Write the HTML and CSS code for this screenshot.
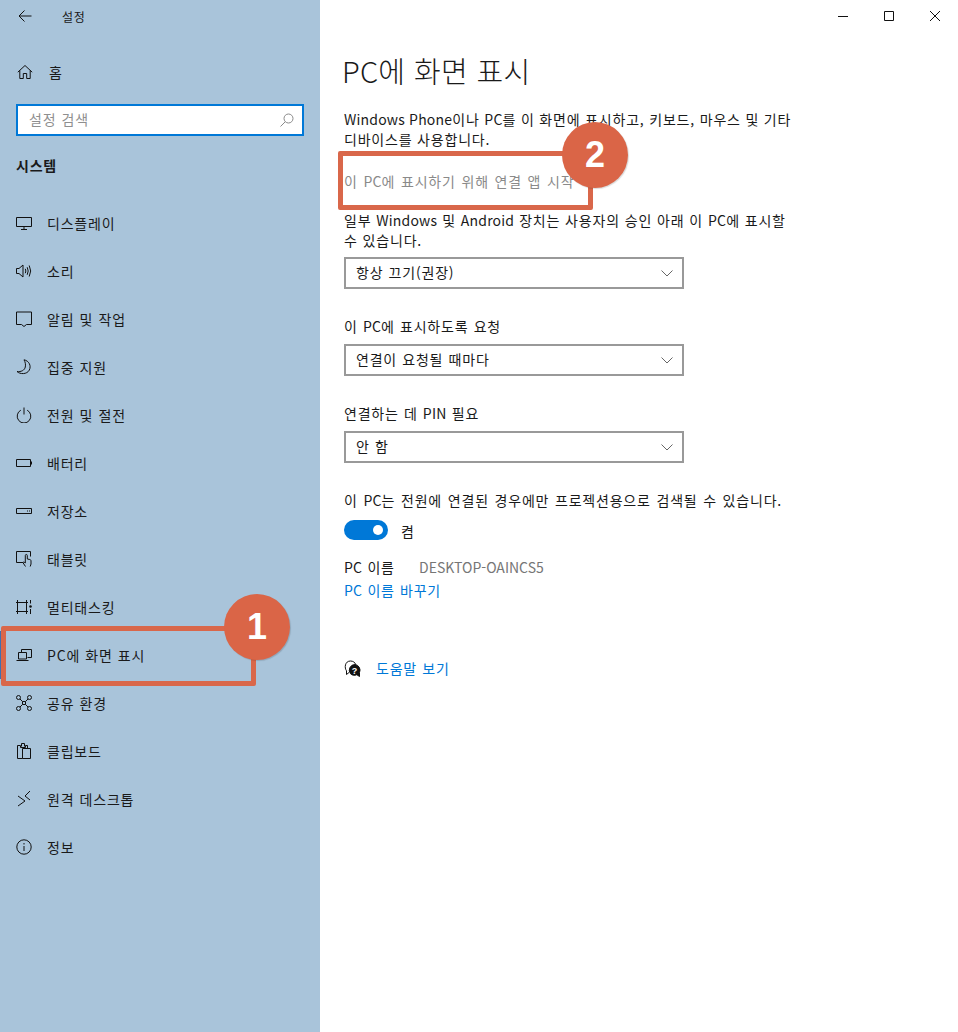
FILE: index.html
```html
<!DOCTYPE html>
<html lang="ko">
  <head>
    <meta charset="utf-8">
    <title>설정</title>
    <link rel="stylesheet" href="styles.css">
  </head>
  <body>
    <div class="app">

      <!-- left menu -->
      <aside class="sidebar">
        <div class="topbar">
          <svg class="backIcon" width="16" height="16" viewBox="0 0 16 16"><path d="M14.500 8H2M7.500 2.500L2 8l5.500 5.500" /></svg>
          <span class="appName">설정</span>
        </div>
        <div class="homeRow">
          <svg class="icon" width="16" height="16" viewBox="0 0 16 16"><path d="M.8 8.200L8 1.500l7.200 6.700M2.800 6.500v8h3.500V9.500h3.400v5h3.500v-8" /></svg>
          <span class="homeText">홈</span>
        </div>
        <div class="searchBox">
          <span class="searchText">설정 검색</span>
          <svg class="searchIcon" width="14" height="14" viewBox="0 0 14 14"><circle cx="8.500" cy="5.500" r="4.500" /><path d="M5.200 8.800L.5 13.500" /></svg>
        </div>
        <h2 class="groupTitle">시스템</h2>
        <nav class="menu">
          <a class="menuItem">
            <svg class="icon" width="16" height="16" viewBox="0 0 16 16"><path d="M.5 2.500h15v9H.5zM8 11.500v2.500M5 14.500h6" /></svg>
            <span>디스플레이</span>
          </a>
          <a class="menuItem">
            <svg class="icon" width="16" height="16" viewBox="0 0 16 16"><path d="M.5 5.500h2.500L7 2v12l-4-3.500H.5zM9.300 5.800q1.100 2.200 0 4.400M11.200 4.200q2 3.800 0 7.600M13.200 2.500q3 5.500 0 11" /></svg>
            <span>소리</span>
          </a>
          <a class="menuItem">
            <svg class="icon" width="16" height="16" viewBox="0 0 16 16"><path d="M.5 1h15v12.500h-5l-2.500 2-2.500-2H.5z" /></svg>
            <span>알림 및 작업</span>
          </a>
          <a class="menuItem">
            <svg class="icon" width="16" height="16" viewBox="0 0 16 16"><path d="M8 .8c5 1 7.500 6 5.300 10.300C11 15.500 4 15.500 1 12.500c4 .5 7.500-1 8.300-4.500C9.800 5.500 9.300 3 8 .8z" /></svg>
            <span>집중 지원</span>
          </a>
          <a class="menuItem">
            <svg class="icon" width="16" height="16" viewBox="0 0 16 16"><path d="M8 .5v7M4.800 3.200a6.800 6.800 0 1 0 6.400 0" /></svg>
            <span>전원 및 절전</span>
          </a>
          <a class="menuItem">
            <svg class="icon" width="16" height="16" viewBox="0 0 16 16"><path d="M.5 4.500h14v7H.5zM15.500 6.500v3" /></svg>
            <span>배터리</span>
          </a>
          <a class="menuItem">
            <svg class="icon" width="16" height="16" viewBox="0 0 16 16"><path d="M.5 5.500h15v5H.5zM11 8h1M13 8h1" /></svg>
            <span>저장소</span>
          </a>
          <a class="menuItem">
            <svg class="icon" width="16" height="16" viewBox="0 0 16 16"><path d="M7 11.500H.5V.5h14v5M9.500 15.500L7.200 12c-.5-.8.500-1.500 1.100-.9l1 1V4.500a1 1 0 0 1 2 0V8l2.500.5c1 .2 1.200.8 1.200 1.500v3l-.8 2.500" /></svg>
            <span>태블릿</span>
          </a>
          <a class="menuItem">
            <svg class="icon" width="16" height="16" viewBox="0 0 16 16"><path d="M1.500 1v14M10.500 1v14M0 3.500h12M0 12.500h12M14.500 1v3.500M14.500 10v5" /><circle class="dot" cx="14.500" cy="7.500" r="1.300" /></svg>
            <span>멀티태스킹</span>
          </a>
          <a class="menuItem current">
            <svg class="icon" width="16" height="16" viewBox="0 0 16 16"><path d="M5.500 5.500v-3h10v8h-4M2.500 5.500h8v6.500h-8zM.5 13.500h12" /></svg>
            <span>PC에 화면 표시</span>
          </a>
          <a class="menuItem">
            <svg class="icon" width="16" height="16" viewBox="0 0 16 16"><circle cx="2.500" cy="2.500" r="2" /><circle cx="13.500" cy="2.500" r="2" /><circle cx="2.500" cy="13.500" r="2" /><circle cx="13.500" cy="13.500" r="2" /><path d="M6.500 6.500h3v3h-3zM4 4l2.500 2.500M12 4L9.500 6.500M4 12l2.500-2.500M12 12L9.500 9.500" /></svg>
            <span>공유 환경</span>
          </a>
          <a class="menuItem">
            <svg class="icon" width="16" height="16" viewBox="0 0 16 16"><path d="M5.500 3.500V.5h3v3M1.500 2.500h3M9.500 2.500h2V5M6.500 15.500H1.500v-13M4.500 2.500v2h5v-2M6.500 5.500h8v10h-8z" /></svg>
            <span>클립보드</span>
          </a>
          <a class="menuItem">
            <svg class="icon" width="16" height="16" viewBox="0 0 16 16"><path d="M2 5l7 5-7 5M14 0L9 5l5 4" /></svg>
            <span>원격 데스크톱</span>
          </a>
          <a class="menuItem">
            <svg class="icon" width="16" height="16" viewBox="0 0 16 16"><circle cx="8" cy="8" r="7.200" /><path d="M8 7v5M8 4v1.500" /></svg>
            <span>정보</span>
          </a>
        </nav>
      </aside>

      <!-- settings page -->
      <main class="content">
        <div class="windowBtns">
          <svg width="10" height="10" viewBox="0 0 10 10"><path d="M0 5.500h10" /></svg>
          <svg width="10" height="10" viewBox="0 0 10 10"><path d="M.5.500h9v9h-9z" /></svg>
          <svg width="10" height="10" viewBox="0 0 10 10"><path d="M0 0l10 10M10 0L0 10" /></svg>
        </div>

        <h1 class="pageTitle">PC에 화면 표시</h1>
        <p class="intro"><span class="latin">Windows Phone</span>이나 <span class="latin">PC</span>를 이 화면에 표시하고, 키보드, 마우스 및 기타<br>디바이스를 사용합니다.</p>
        <p class="startLink">이 <span class="latin">PC</span>에 표시하기 위해 연결 앱 시작</p>
        <p class="note">일부 <span class="latin">Windows</span> 및 <span class="latin">Android</span> 장치는 사용자의 승인 아래 이 <span class="latin">PC</span>에 표시할<br>수 있습니다.</p>

        <div class="selectBox first">
          <span>항상 끄기(권장)</span>
          <svg class="chevron" width="12" height="7" viewBox="0 0 12 7"><path d="M.5.500l5.500 5.500 5.500-5.500" /></svg>
        </div>

        <p class="fieldLabel">이 <span class="latin">PC</span>에 표시하도록 요청</p>
        <div class="selectBox">
          <span>연결이 요청될 때마다</span>
          <svg class="chevron" width="12" height="7" viewBox="0 0 12 7"><path d="M.5.500l5.500 5.500 5.500-5.500" /></svg>
        </div>

        <p class="fieldLabel">연결하는 데 <span class="latin">PIN</span> 필요</p>
        <div class="selectBox">
          <span>안 함</span>
          <svg class="chevron" width="12" height="7" viewBox="0 0 12 7"><path d="M.5.500l5.500 5.500 5.500-5.500" /></svg>
        </div>

        <p class="powerNote">이 <span class="latin">PC</span>는 전원에 연결된 경우에만 프로젝션용으로 검색될 수 있습니다.</p>
        <div class="toggleRow">
          <div class="toggle"><div class="knob"></div></div>
          <span class="toggleText">켬</span>
        </div>

        <div class="nameRow">
          <span class="nameLabel"><span class="latin">PC</span> 이름</span>
          <span class="pcName">DESKTOP-OAINCS5</span>
        </div>
        <a class="renameLink"><span class="latin">PC</span> 이름 바꾸기</a>

        <div class="helpRow">
          <svg class="helpIcon" width="17" height="17" viewBox="0 0 17 17">
            <path class="bubbleBack" d="M5 12.500L2.500 14.500V10.800C.2 8 .8 1 6.500 1c2.600 0 4.500 1.500 5.300 3.500" />
            <path class="bubbleFront" d="M11 4.500a5.700 5.700 0 0 0-4.500 9.200c1.500 1.700 4.300 2 6.300 1l2.700 1.800v-4A5.700 5.700 0 0 0 11 4.500z" />
            <text class="helpMark" x="11" y="13.500">?</text>
          </svg>
          <a>도움말 보기</a>
        </div>
      </main>

      <!-- red callouts drawn on top of the screenshot -->
      <div class="callBox boxOne"></div>
      <div class="callDot dotOne">1</div>
      <div class="callBox boxTwo"></div>
      <div class="callDot dotTwo">2</div>
    </div>
  </body>
</html>
```

FILE: styles.css
```css
* {
  box-sizing: border-box;
}

html, body {
  margin: 0;
  height: 100%;
}

body {
  font-family: "Noto Sans CJK KR", "Noto Sans", sans-serif;
  font-size: 14px;
  letter-spacing: 0.8px;
  word-spacing: 0.5px;
  color: #1a1a1a;
  background-color: #ffffff;
}

p, h1, h2 {
  margin: 0;
  font-weight: 400;
}

/* latin words are not as wide in the original font */
.latin {
  letter-spacing: 0.2px;
}

.app {
  position: relative;
  display: flex;
  width: 958px;
  height: 1032px;
  overflow: hidden;
}

/* left menu */

.sidebar {
  width: 320px;
  flex: none;
  background-color: #a9c4da;
}

.sidebar svg {
  fill: none;
  stroke: #111111;
  stroke-width: 1;
}

.topbar {
  display: flex;
  align-items: center;
  height: 32px;
  padding-left: 17px;
}

.appName {
  margin-left: 29px;
  font-size: 12px;
}

.homeRow {
  display: flex;
  align-items: center;
  height: 46px;
  margin-top: 17px;
  padding-left: 17px;
}

.homeText {
  margin-left: 16px;
}

.icon {
  flex: none;
}

.searchBox {
  display: flex;
  align-items: center;
  justify-content: space-between;
  width: 288px;
  height: 32px;
  margin: 9px 0 0 16px;
  padding: 0 8px 0 11px;
  border: 2px solid #0078d7;
  background-color: #ffffff;
}

.searchText {
  margin-top: -2px;
  color: #8f8f8f;
}

.sidebar .searchIcon {
  stroke: #8a8a8a;
}

.groupTitle {
  height: 20px;
  margin: 19px 0 0 16px;
  font-size: 14px;
  font-weight: 700;
  line-height: 20px;
}

.menu {
  display: flex;
  flex-direction: column;
  margin-top: 24px;
}

.menuItem {
  display: flex;
  align-items: center;
  gap: 15px;
  height: 48px;
  padding-left: 16px;
}

.menuItem.current {
  box-shadow: inset 2px 0 0 #3f6fb0;
}

.sidebar .dot {
  fill: #111111;
  stroke: none;
}

/* settings page */

.content {
  position: relative;
  flex: 1;
  padding: 49px 0 0 24px;
}

.windowBtns {
  position: absolute;
  top: 11px;
  right: 18px;
  display: flex;
  gap: 36px;
}

.windowBtns svg {
  fill: none;
  stroke: #111111;
  stroke-width: 1;
}

.pageTitle {
  margin-left: -2px;
  font-size: 29px;
  font-weight: 300;
  letter-spacing: 0.2px;
  line-height: 42px;
}

.intro, .note {
  line-height: 19.5px;
  white-space: nowrap;
}

.intro {
  margin-top: 19px;
  word-spacing: 0;
}

.startLink {
  margin-top: 22px;
  line-height: 20px;
  word-spacing: 1px;
  color: #8a8a8a;
}

.note {
  margin-top: 20px;
  word-spacing: 0.2px;
}

.selectBox {
  display: flex;
  align-items: center;
  justify-content: space-between;
  width: 340px;
  height: 32px;
  margin-top: 8px;
  padding: 0 9px 0 10px;
  border: 2px solid #999999;
}

.selectBox.first {
  margin-top: 7px;
}

.selectBox span {
  margin-top: -2px;
}

.chevron {
  fill: none;
  stroke: #666666;
  stroke-width: 1;
}

.fieldLabel {
  margin-top: 27px;
  line-height: 20px;
}

.powerNote {
  margin-top: 27px;
  line-height: 20px;
  word-spacing: 1px;
}

.toggleRow {
  display: flex;
  align-items: center;
  gap: 13px;
  margin-top: 10px;
  height: 20px;
}

.toggleText {
  margin-top: 2px;
}

.toggle {
  position: relative;
  width: 44px;
  height: 20px;
  border-radius: 10px;
  background-color: #0078d7;
}

.knob {
  position: absolute;
  top: 5px;
  right: 5px;
  width: 10px;
  height: 10px;
  border-radius: 50%;
  background-color: #ffffff;
}

.nameRow {
  display: flex;
  margin-top: 17px;
  line-height: 20px;
}

.nameLabel {
  width: 75px;
}

.pcName {
  color: #767676;
  letter-spacing: 0;
}

.renameLink {
  display: block;
  margin-top: 3px;
  line-height: 20px;
  color: #0078d7;
}

.helpRow {
  display: flex;
  align-items: center;
  gap: 15px;
  margin-top: 58px;
  height: 20px;
  color: #0078d7;
}

.helpIcon {
  stroke: #111111;
  stroke-width: 1;
  fill: none;
}

.bubbleFront {
  fill: #111111;
}

.helpMark {
  fill: #ffffff;
  stroke: none;
  font-family: "Liberation Sans", sans-serif;
  font-size: 9px;
  font-weight: 700;
  text-anchor: middle;
}

/* callouts */

.callBox {
  position: absolute;
  border: 5px solid #d9674a;
  border-radius: 2px;
}

.boxOne {
  left: 1px;
  top: 626px;
  width: 255px;
  height: 60px;
}

.boxTwo {
  left: 338px;
  top: 151px;
  width: 255px;
  height: 59px;
}

.callDot {
  position: absolute;
  display: flex;
  align-items: center;
  justify-content: center;
  width: 66px;
  height: 66px;
  border-radius: 50%;
  background-color: #da6547;
  box-shadow: 1px 1px 1px rgba(0, 0, 0, 0.15);
  color: #ffffff;
  font-family: "Liberation Sans", sans-serif;
  font-size: 36px;
  font-weight: 700;
  letter-spacing: 0;
}

.dotOne {
  left: 224px;
  top: 594px;
}

.dotTwo {
  left: 562px;
  top: 122px;
}
```
